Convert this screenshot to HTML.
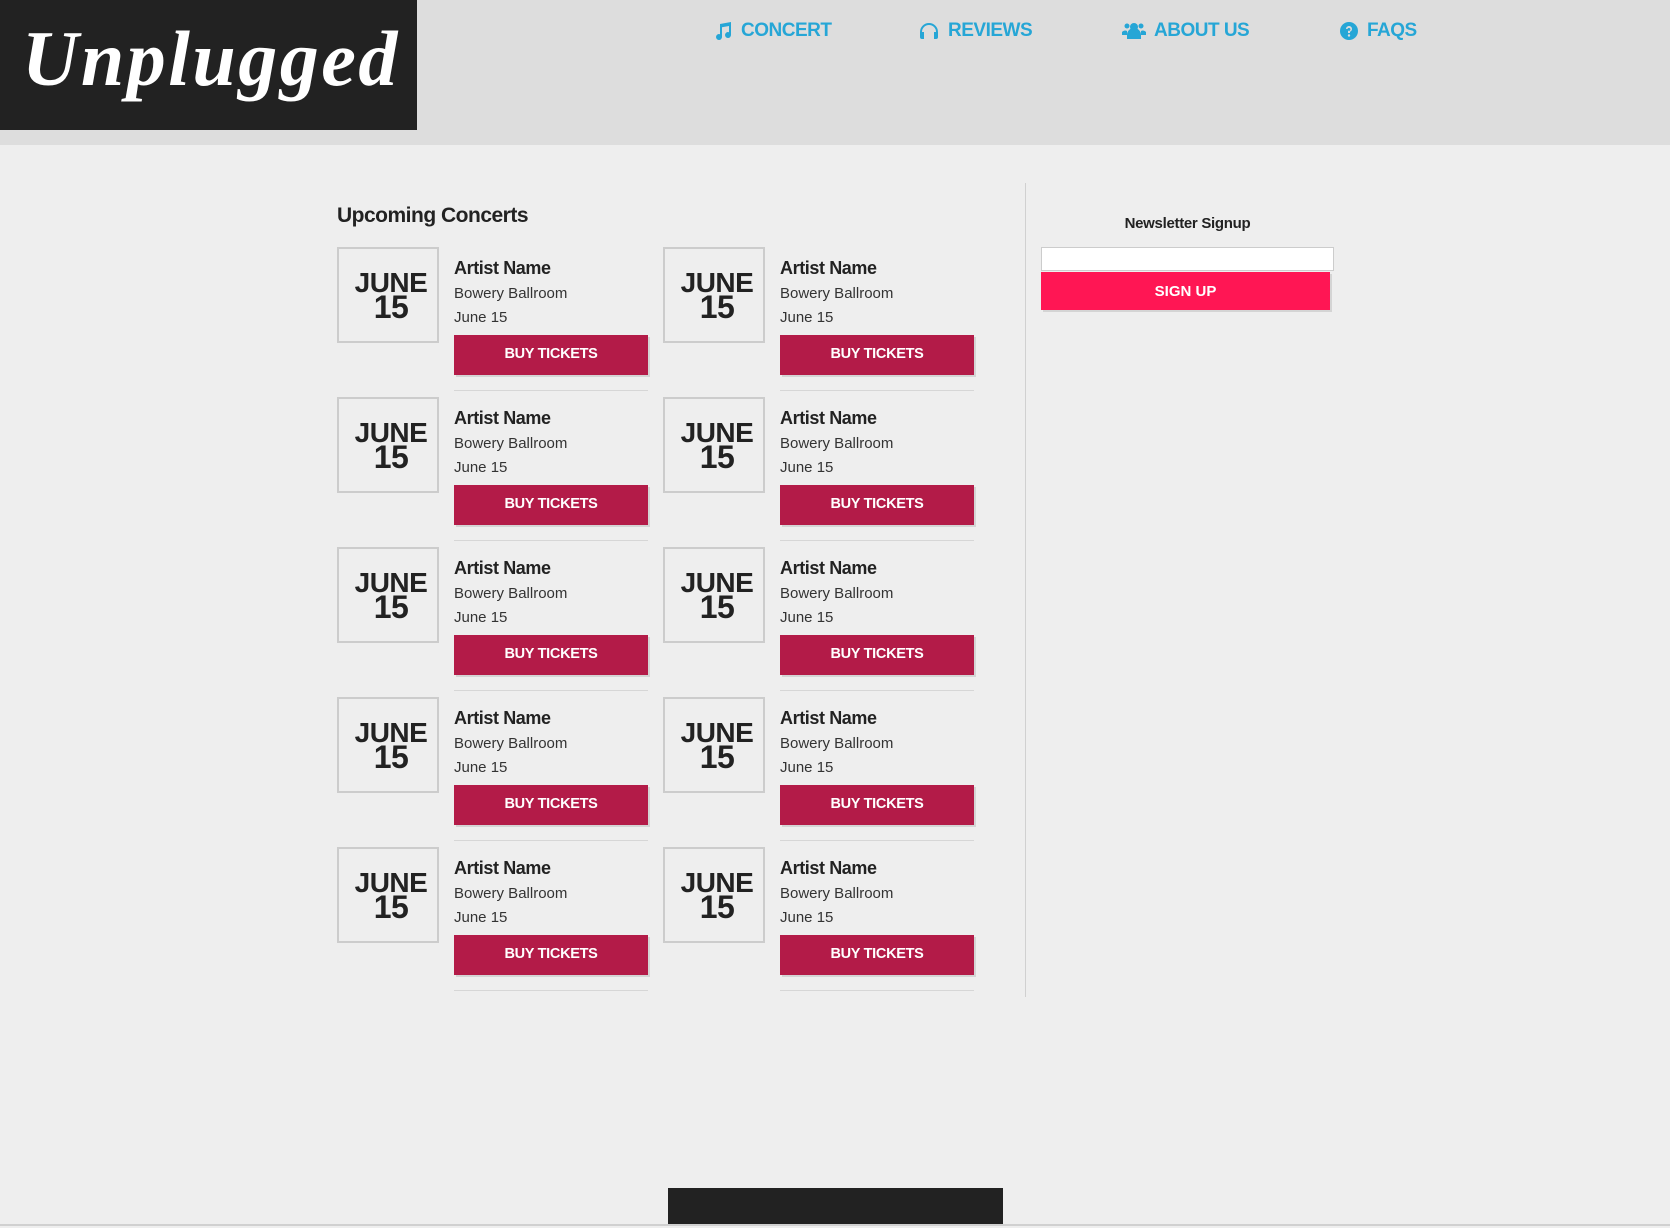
<!DOCTYPE html>
<html><head><meta charset="utf-8"><style>
*{margin:0;padding:0;box-sizing:border-box}
body{width:1670px;height:1228px;background:#eeeeee;font-family:"Liberation Sans",sans-serif;position:relative;overflow:hidden;color:#222}
.hdr{position:absolute;left:0;top:0;width:1670px;height:145px;background:#dddddd}
.logo{position:absolute;left:0;top:0;width:417px;height:130px;background:#222}
.logo span{position:absolute;left:22px;top:14px;font-family:"Liberation Serif",serif;font-weight:bold;font-style:italic;font-size:78px;color:#fff;letter-spacing:2.5px}
.nav{position:absolute;top:20px;font-weight:bold;font-size:19px;color:#26a6d6;letter-spacing:-0.5px;display:flex;align-items:center;gap:8px}
.nav svg{fill:#26a6d6}
h2{position:absolute;left:337px;top:204px;font-size:21px;font-weight:bold;letter-spacing:-0.5px}
.card{position:absolute;width:320px;height:150px}
.date{position:absolute;left:0;top:0;width:102px;height:96px;border:2px solid #ccc;text-align:center;font-weight:bold;font-size:28px;line-height:25px;padding-top:21px;padding-left:6px;letter-spacing:-0.5px}
.date b{display:block;font-size:32px}
.info{position:absolute;left:117px;top:11px;width:194px}
.an{font-weight:bold;font-size:18px;letter-spacing:-0.4px;height:25px}
.vn{font-size:15px;height:24px;color:#333;padding-top:2px}
.btn{position:absolute;left:117px;top:88px;width:194px;height:40px;background:#b31b48;color:#fff;font-weight:bold;font-size:14.5px;text-align:center;line-height:38px;box-shadow:2px 2px 0 #d4d4d4;letter-spacing:-0.3px}
.sep{position:absolute;left:117px;top:143px;width:194px;height:1px;background:#d6d6d6}
.div{position:absolute;left:1025px;top:183px;width:1px;height:814px;background:#d0d0d0}
.nl{position:absolute;left:1041px;width:293px;top:215px;text-align:center;font-weight:bold;font-size:15px;letter-spacing:-0.3px}
.inp{position:absolute;left:1041px;top:247px;width:293px;height:24px;background:#fff;border:1px solid #ccc}
.sb{position:absolute;left:1041px;top:272px;width:289px;height:38px;background:#ff1654;color:#fff;font-weight:bold;font-size:15px;text-align:center;line-height:40px;box-shadow:2px 2px 0 #d4d4d4}
.foot{position:absolute;left:668px;top:1188px;width:335px;height:36px;background:#222}
.fl{position:absolute;left:0;top:1224px;width:1670px;height:2px;background:#d0d0d0}
</style></head><body>
<div class="hdr"></div>
<div class="logo"><span>Unplugged</span></div>
<div class="nav" style="left:713px"><svg width="20" height="20" viewBox="0 0 20 20"><path d="M7 3l11-2v13a3 3 0 1 1-2-2.8V5L9 6.3V16a3 3 0 1 1-2-2.8z"/></svg>CONCERT</div>
<div class="nav" style="left:918px"><svg width="22" height="20" viewBox="0 0 22 20"><path d="M11 2a9 9 0 0 0-9 9v5a2 2 0 0 0 2 2h2v-7H4a7 7 0 0 1 14 0h-2v7h2a2 2 0 0 0 2-2v-5a9 9 0 0 0-9-9z"/></svg>REVIEWS</div>
<div class="nav" style="left:1122px"><svg width="24" height="20" viewBox="0 0 24 20"><circle cx="12" cy="6" r="4"/><circle cx="5" cy="5" r="2.5"/><circle cx="19" cy="5" r="2.5"/><path d="M5 18v-4a7 7 0 0 1 14 0v4zM0 14v-3a4 4 0 0 1 5-1v4zM24 14v-3a4 4 0 0 0-5-1v4z"/></svg>ABOUT US</div>
<div class="nav" style="left:1339px"><svg width="20" height="20" viewBox="0 0 20 20"><circle cx="10" cy="10" r="9"/><path d="M7 8a3 3 0 1 1 4 2.8V12H9v-2.5a1.5 1.5 0 1 0-0.5-1.5z" fill="#ddd"/><circle cx="10" cy="14.5" r="1.2" fill="#ddd"/></svg>FAQS</div>

<h2>Upcoming Concerts</h2>

<div class="card" style="left:337px;top:247px"><div class="date">JUNE<b>15</b></div><div class="info"><div class="an">Artist Name</div><div class="vn">Bowery Ballroom</div><div class="vn">June 15</div></div><div class="btn">BUY TICKETS</div><div class="sep"></div></div>
<div class="card" style="left:663px;top:247px"><div class="date">JUNE<b>15</b></div><div class="info"><div class="an">Artist Name</div><div class="vn">Bowery Ballroom</div><div class="vn">June 15</div></div><div class="btn">BUY TICKETS</div><div class="sep"></div></div>
<div class="card" style="left:337px;top:397px"><div class="date">JUNE<b>15</b></div><div class="info"><div class="an">Artist Name</div><div class="vn">Bowery Ballroom</div><div class="vn">June 15</div></div><div class="btn">BUY TICKETS</div><div class="sep"></div></div>
<div class="card" style="left:663px;top:397px"><div class="date">JUNE<b>15</b></div><div class="info"><div class="an">Artist Name</div><div class="vn">Bowery Ballroom</div><div class="vn">June 15</div></div><div class="btn">BUY TICKETS</div><div class="sep"></div></div>
<div class="card" style="left:337px;top:547px"><div class="date">JUNE<b>15</b></div><div class="info"><div class="an">Artist Name</div><div class="vn">Bowery Ballroom</div><div class="vn">June 15</div></div><div class="btn">BUY TICKETS</div><div class="sep"></div></div>
<div class="card" style="left:663px;top:547px"><div class="date">JUNE<b>15</b></div><div class="info"><div class="an">Artist Name</div><div class="vn">Bowery Ballroom</div><div class="vn">June 15</div></div><div class="btn">BUY TICKETS</div><div class="sep"></div></div>
<div class="card" style="left:337px;top:697px"><div class="date">JUNE<b>15</b></div><div class="info"><div class="an">Artist Name</div><div class="vn">Bowery Ballroom</div><div class="vn">June 15</div></div><div class="btn">BUY TICKETS</div><div class="sep"></div></div>
<div class="card" style="left:663px;top:697px"><div class="date">JUNE<b>15</b></div><div class="info"><div class="an">Artist Name</div><div class="vn">Bowery Ballroom</div><div class="vn">June 15</div></div><div class="btn">BUY TICKETS</div><div class="sep"></div></div>
<div class="card" style="left:337px;top:847px"><div class="date">JUNE<b>15</b></div><div class="info"><div class="an">Artist Name</div><div class="vn">Bowery Ballroom</div><div class="vn">June 15</div></div><div class="btn">BUY TICKETS</div><div class="sep"></div></div>
<div class="card" style="left:663px;top:847px"><div class="date">JUNE<b>15</b></div><div class="info"><div class="an">Artist Name</div><div class="vn">Bowery Ballroom</div><div class="vn">June 15</div></div><div class="btn">BUY TICKETS</div><div class="sep"></div></div>

<div class="div"></div>
<div class="nl">Newsletter Signup</div>
<div class="inp"></div>
<div class="sb">SIGN UP</div>
<div class="foot"></div>
<div class="fl"></div>
</body></html>
